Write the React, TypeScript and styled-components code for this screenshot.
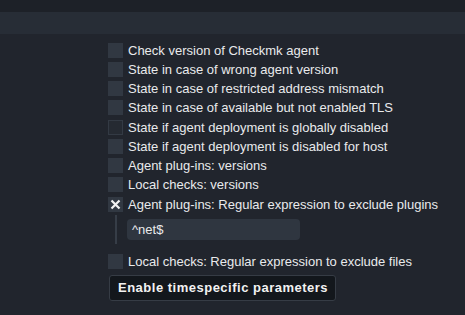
import React from "react";
import styled, { createGlobalStyle } from "styled-components";

const Global = createGlobalStyle`
  html, body { margin: 0; padding: 0; background: #21252d; }
  body { font-family: "Liberation Sans", Arial, sans-serif; }
`;

const Page = styled.div`
  width: 465px;
  height: 315px;
  background: #21252d;
  overflow: hidden;
  display: flex;
  flex-direction: column;
`;

const TopStrip = styled.div`
  height: 12px;
  background: #1d2128;
`;

const Band = styled.div`
  height: 22px;
  background: #272d36;
`;

const Content = styled.div`
  display: flex;
  flex-direction: column;
  padding: 6.4px 0 0 108px;
`;

const Row = styled.label`
  display: flex;
  align-items: center;
  height: 19.25px;
  gap: 5px;
  color: #e9eaec;
  font-size: 13px;
  white-space: nowrap;
`;

const Box = styled.span<{ $dim?: boolean }>`
  width: 15px;
  height: 15px;
  box-sizing: border-box;
  flex: none;
  background: ${(p) => (p.$dim ? "#252a32" : "#313842")};
  border: ${(p) => (p.$dim ? "1px solid #333a44" : "none")};
  display: flex;
  align-items: center;
  justify-content: center;
`;

const Sub = styled.div`
  display: flex;
  align-items: center;
  height: 29px;
  margin: 1.3px 0 8.4px 7px;
  gap: 10px;
`;

const Line = styled.div`
  width: 2px;
  align-self: stretch;
  background: #363d47;
`;

const Input = styled.div`
  width: 173px;
  height: 21px;
  border-radius: 4px;
  background: #2f3640;
  color: #e9eaec;
  font-size: 13px;
  display: flex;
  align-items: center;
  padding-left: 5px;
  box-sizing: border-box;
`;

const Button = styled.div`
  margin: 3.4px 0 0 1px;
  width: 227px;
  height: 26px;
  box-sizing: border-box;
  border: 1px solid #363c45;
  border-radius: 3px;
  background: #13171c;
  color: #f2f2f2;
  font-weight: bold;
  font-size: 13px;
  letter-spacing: 0.5px;
  display: flex;
  align-items: center;
  padding-left: 8px;
`;

const Cross = () => (
  <svg width="11" height="11" viewBox="0 0 11 11">
    <path d="M1.5 1.5 L9.5 9.5 M9.5 1.5 L1.5 9.5" stroke="#f2f2f2" strokeWidth="2.2" strokeLinecap="butt" />
  </svg>
);

const items: { label: string; dim?: boolean; checked?: boolean }[] = [
  { label: "Check version of Checkmk agent" },
  { label: "State in case of wrong agent version" },
  { label: "State in case of restricted address mismatch" },
  { label: "State in case of available but not enabled TLS" },
  { label: "State if agent deployment is globally disabled", dim: true },
  { label: "State if agent deployment is disabled for host" },
  { label: "Agent plug-ins: versions" },
  { label: "Local checks: versions" },
  { label: "Agent plug-ins: Regular expression to exclude plugins", checked: true },
];

export default function App() {
  return (
    <Page>
      <Global />
      <TopStrip />
      <Band />
      <Content>
        {items.map((it) => (
          <Row key={it.label}>
            <Box $dim={it.dim}>{it.checked && <Cross />}</Box>
            {it.label}
          </Row>
        ))}
        <Sub>
          <Line />
          <Input>^net$</Input>
        </Sub>
        <Row>
          <Box />
          Local checks: Regular expression to exclude files
        </Row>
        <Button>Enable timespecific parameters</Button>
      </Content>
    </Page>
  );
}
